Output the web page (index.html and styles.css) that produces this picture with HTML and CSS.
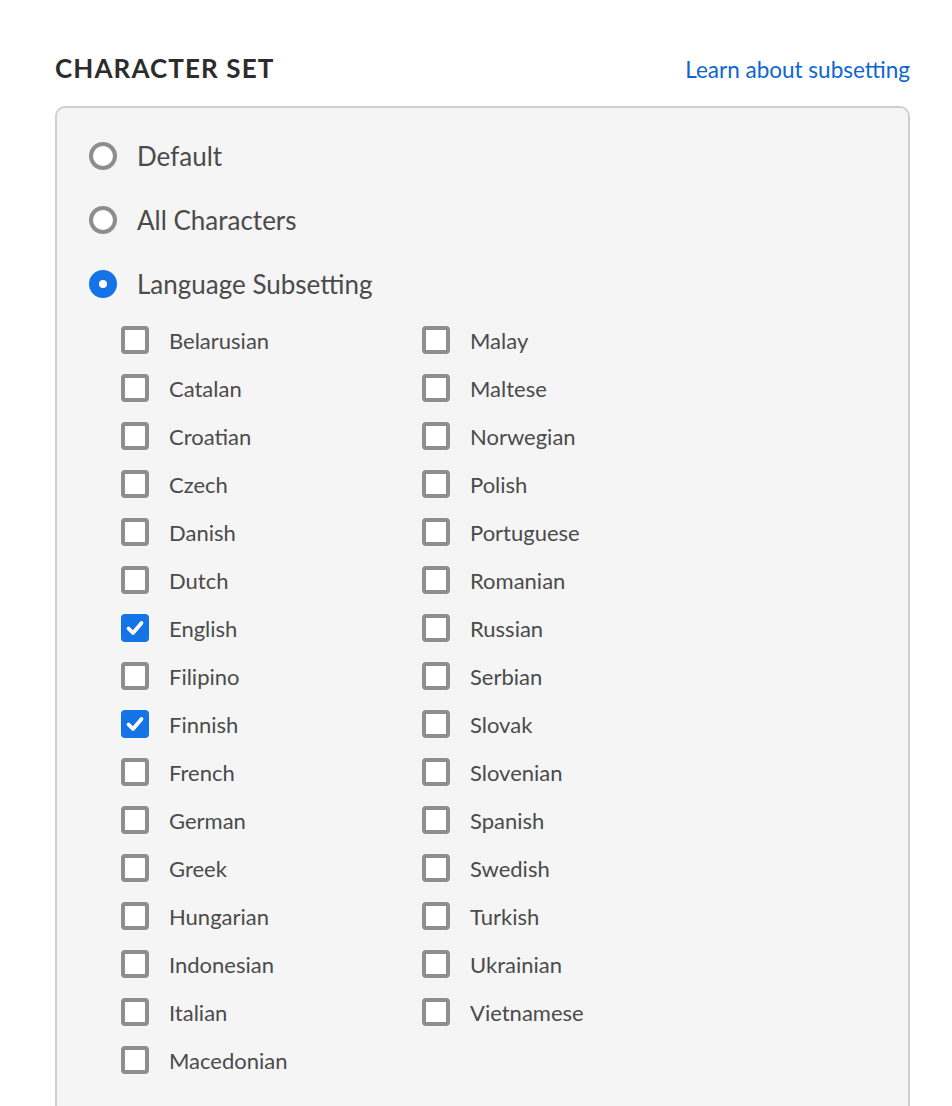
FILE: index.html
```html
<!DOCTYPE html>
<html lang="en">
<head>
    <meta charset="UTF-8">
    <meta name="viewport" content="width=device-width, initial-scale=1.0">
    <title>Character Set</title>
    <link rel="stylesheet" href="styles.css">
</head>
<body>
    <div class="panel">
        <div class="panel-header">
            <h2 class="panel-title">CHARACTER SET</h2>
            <a class="panel-link" href="#">Learn about subsetting</a>
        </div>

        <div class="option-box">
            <label class="radio-row"><span class="radio"></span>Default</label>
            <label class="radio-row"><span class="radio"></span>All Characters</label>
            <label class="radio-row"><span class="radio checked"></span>Language Subsetting</label>

            <div class="lang-grid">
                <label class="check-row"><span class="checkbox"></span>Belarusian</label>
                <label class="check-row"><span class="checkbox"></span>Catalan</label>
                <label class="check-row"><span class="checkbox"></span>Croatian</label>
                <label class="check-row"><span class="checkbox"></span>Czech</label>
                <label class="check-row"><span class="checkbox"></span>Danish</label>
                <label class="check-row"><span class="checkbox"></span>Dutch</label>
                <label class="check-row"><span class="checkbox checked"><svg viewBox="0 0 28 28"><path d="M7.5 14.5l4.5 4.5 8.5-10"/></svg></span>English</label>
                <label class="check-row"><span class="checkbox"></span>Filipino</label>
                <label class="check-row"><span class="checkbox checked"><svg viewBox="0 0 28 28"><path d="M7.5 14.5l4.5 4.5 8.5-10"/></svg></span>Finnish</label>
                <label class="check-row"><span class="checkbox"></span>French</label>
                <label class="check-row"><span class="checkbox"></span>German</label>
                <label class="check-row"><span class="checkbox"></span>Greek</label>
                <label class="check-row"><span class="checkbox"></span>Hungarian</label>
                <label class="check-row"><span class="checkbox"></span>Indonesian</label>
                <label class="check-row"><span class="checkbox"></span>Italian</label>
                <label class="check-row"><span class="checkbox"></span>Macedonian</label>

                <label class="check-row"><span class="checkbox"></span>Malay</label>
                <label class="check-row"><span class="checkbox"></span>Maltese</label>
                <label class="check-row"><span class="checkbox"></span>Norwegian</label>
                <label class="check-row"><span class="checkbox"></span>Polish</label>
                <label class="check-row"><span class="checkbox"></span>Portuguese</label>
                <label class="check-row"><span class="checkbox"></span>Romanian</label>
                <label class="check-row"><span class="checkbox"></span>Russian</label>
                <label class="check-row"><span class="checkbox"></span>Serbian</label>
                <label class="check-row"><span class="checkbox"></span>Slovak</label>
                <label class="check-row"><span class="checkbox"></span>Slovenian</label>
                <label class="check-row"><span class="checkbox"></span>Spanish</label>
                <label class="check-row"><span class="checkbox"></span>Swedish</label>
                <label class="check-row"><span class="checkbox"></span>Turkish</label>
                <label class="check-row"><span class="checkbox"></span>Ukrainian</label>
                <label class="check-row"><span class="checkbox"></span>Vietnamese</label>
            </div>
        </div>
    </div>
</body>
</html>
```

FILE: styles.css
```css
:root {
    --blue: #1473e6;
    --control-gray: #8e8e8e;
    --text: #4b4b4b;
}

body {
    margin: 0;
    background: #fff;
    color: var(--text);
    font-family: Lato, "Open Sans", sans-serif;
}

.panel {
    padding: 52px 42px 0 55px;
}

.panel-header {
    display: flex;
    justify-content: space-between;
    align-items: baseline;
}

.panel-title {
    margin: 0;
    font-size: 26px;
    font-weight: 700;
    letter-spacing: 1.1px;
    color: #2c2c2c;
}

.panel-link {
    color: #0d66d0;
    font-size: 22.5px;
    text-decoration: none;
}

.option-box {
    margin-top: 22px;
    min-height: 966px;
    padding: 16px 32px;
    background: #f5f5f5;
    border: 2px solid #cfcfcf;
    border-bottom: none;
    border-radius: 10px 10px 0 0;
}

.radio-row {
    display: flex;
    align-items: center;
    gap: 20px;
    height: 64px;
    font-size: 26px;
}

.radio {
    width: 28px;
    height: 28px;
    box-sizing: border-box;
    border: 4px solid var(--control-gray);
    border-radius: 50%;
    background: #fff;
}

.radio.checked {
    border: 10px solid var(--blue);
}

.lang-grid {
    display: grid;
    grid-template-columns: 301px 301px;
    grid-template-rows: repeat(16, 48px);
    grid-auto-flow: column;
    padding-left: 32px;
}

.check-row {
    display: flex;
    align-items: center;
    gap: 20px;
    font-size: 22px;
}

.checkbox {
    width: 28px;
    height: 28px;
    box-sizing: border-box;
    border: 4px solid var(--control-gray);
    border-radius: 4px;
    background: #fff;
    display: flex;
}

.checkbox.checked {
    border: none;
    background: var(--blue);
}

.checkbox svg {
    width: 28px;
    height: 28px;
    fill: none;
    stroke: #fff;
    stroke-width: 3.8;
    stroke-linecap: round;
    stroke-linejoin: round;
}
```
